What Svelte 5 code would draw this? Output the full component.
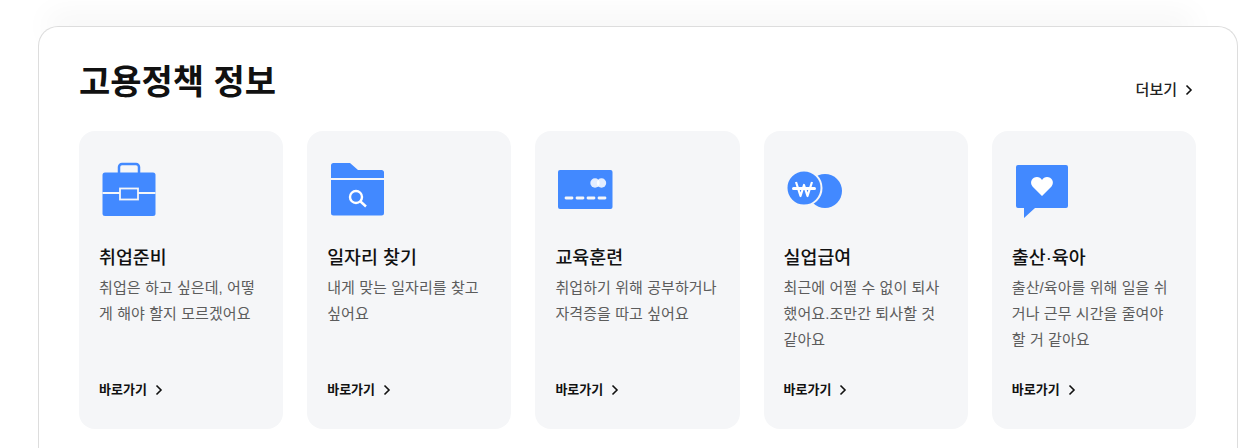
<script lang="ts">
  const items = [
    { icon: 'case', title: '취업준비', desc: '취업은 하고 싶은데, 어떻게 해야 할지 모르겠어요' },
    { icon: 'folder', title: '일자리 찾기', desc: '내게 맞는 일자리를 찾고 싶어요' },
    { icon: 'card', title: '교육훈련', desc: '취업하기 위해 공부하거나 자격증을 따고 싶어요' },
    { icon: 'coin', title: '실업급여', desc: '최근에 어쩔 수 없이 퇴사했어요.조만간 퇴사할 것 같아요' },
    { icon: 'chat', title: '출산·육아', desc: '출산/육아를 위해 일을 쉬거나 근무 시간을 줄여야 할 거 같아요' }
  ];
</script>

<div class="topbar"></div>

<section class="policy">
  <header class="head">
    <h2>고용정책 정보</h2>
    <a class="more" href="#more">
      더보기
      <svg class="chev" width="8" height="12" viewBox="0 0 8 12"><path d="M1.500 1.500 6 6l-4.500 4.500" /></svg>
    </a>
  </header>

  <ul class="cards">
    {#each items as item}
      <li class="card">
        <svg class="icon" width="64" height="64" viewBox="0 0 64 64">
          {#if item.icon === 'case'}
            <rect class="line" x="20" y="7" width="20" height="12" rx="3" />
            <rect class="fill" x="3.500" y="15.500" width="53" height="43.500" rx="2.500" />
            <path class="cut" d="M3.500 36H21M39 36h17.500" />
            <rect class="cut" x="21" y="31.500" width="18" height="11" />
          {:else if item.icon === 'folder'}
            <path class="fill" d="M4 8.500A2.500 2.500 0 0 1 6.500 6H23l8 7h23.500A2.500 2.500 0 0 1 57 15.500V56a2.500 2.500 0 0 1-2.500 2.500h-48A2.500 2.500 0 0 1 4 56z" />
            <path class="cut" d="M4 22h53" />
            <circle class="lens" cx="29" cy="40" r="6" />
            <path class="lens" d="m33.500 44.500 5.500 5" />
          {:else if item.icon === 'card'}
            <rect class="fill" x="3" y="13" width="54.500" height="39" rx="2" />
            <circle class="dot" cx="40" cy="26" r="4.700" />
            <circle class="dot" cx="46.500" cy="26" r="4.700" />
            <path class="cut dash" d="M11 41h6M22 41h6M33 41h6M44 41h6" />
          {:else if item.icon === 'coin'}
            <circle class="fill" cx="41" cy="34" r="17" />
            <circle class="fill ring" cx="20" cy="31" r="17.500" />
            <path class="won" d="m12 25 4.500 14L20 28l3.500 11L28 25" />
            <path class="won bar" d="M9.500 31.500h21" />
          {:else}
            <path class="fill" d="M6 8h48a2 2 0 0 1 2 2v39a2 2 0 0 1-2 2H23L12 61V51H6a2 2 0 0 1-2-2V10a2 2 0 0 1 2-2z" />
            <path class="heart" d="M30 39 20.500 29.500C17 25 20.500 20 25 20c2 0 4 1 5 3 1-2 3-3 5-3 4.500 0 8 5 4.500 9.500z" />
          {/if}
        </svg>
        <h3>{item.title}</h3>
        <p>{item.desc}</p>
        <a class="go" href="#go">
          바로가기
          <svg class="chev" width="8" height="12" viewBox="0 0 8 12"><path d="M1.500 1.500 6 6l-4.500 4.500" /></svg>
        </a>
      </li>
    {/each}
  </ul>
</section>

<style>
  :global(body) {
    background: #fff;
    font-family: "Liberation Sans", "Noto Sans CJK KR", sans-serif;
    overflow: hidden;
  }

  .topbar {
    height: 0;
    box-shadow: 0 0 30px 12px rgba(0, 0, 0, 0.045);
    margin: 0 60px;
  }

  .policy {
    box-sizing: border-box;
    width: 1200px;
    height: 422px;
    margin: 26px 0 0 38px;
    padding: 0 41px 0 40px;
    background: #fff;
    border: 1px solid #ddd;
    border-bottom: 0;
    border-radius: 20px 20px 0 0;
  }

  .head {
    display: flex;
    justify-content: space-between;
    align-items: flex-start;
    height: 104px;
    padding-top: 31px;
    box-sizing: border-box;
  }

  h2 {
    margin: 0;
    font-size: 34px;
    font-weight: 700;
    line-height: 48px;
    color: #111;
  }

  .more {
    display: flex;
    align-items: center;
    gap: 8px;
    margin: 20px 3px 0 0;
    font-size: 15px;
    font-weight: 500;
    line-height: 24px;
    color: #222;
    text-decoration: none;
  }

  .cards {
    display: grid;
    grid-template-columns: repeat(5, 1fr);
    gap: 24px;
    margin: 0;
    padding: 0;
    list-style: none;
  }

  .card {
    box-sizing: border-box;
    display: flex;
    flex-direction: column;
    height: 298px;
    padding: 26px 20px 0;
    background: #f5f6f8;
    border-radius: 16px;
  }

  .icon {
    flex: none;
    display: block;
  }

  h3 {
    margin: 23px 0 0;
    font-size: 18.400px;
    font-weight: 500;
    line-height: 28px;
    color: #111;
  }

  p {
    height: 78px;
    margin: 3px 0 0;
    font-size: 15px;
    letter-spacing: 0.08px;
    line-height: 26px;
    color: #5c5c5c;
    word-break: break-all;
  }

  .go {
    display: flex;
    align-items: center;
    gap: 8px;
    margin-top: 27px;
    font-size: 13px;
    font-weight: 700;
    line-height: 20px;
    color: #111;
    text-decoration: none;
  }

  .chev path {
    fill: none;
    stroke: #111;
    stroke-width: 1.600;
  }

  .fill {
    fill: #4289ff;
  }

  .line {
    fill: none;
    stroke: #4289ff;
    stroke-width: 2.500;
  }

  .cut {
    fill: none;
    stroke: #f5f6f8;
    stroke-width: 1.800;
  }

  .lens {
    fill: none;
    stroke: #fff;
    stroke-width: 2.400;
  }

  .dash {
    stroke-width: 2.800;
    stroke-linecap: round;
  }

  .won {
    fill: none;
    stroke: #fff;
    stroke-width: 2.200;
    stroke-linejoin: round;
  }

  .bar {
    stroke-width: 3;
    stroke-linecap: round;
  }

  .ring {
    stroke: #f5f6f8;
    stroke-width: 2;
  }

  .dot {
    fill: #fff;
    fill-opacity: 0.85;
  }

  .heart {
    fill: #fff;
  }
</style>
